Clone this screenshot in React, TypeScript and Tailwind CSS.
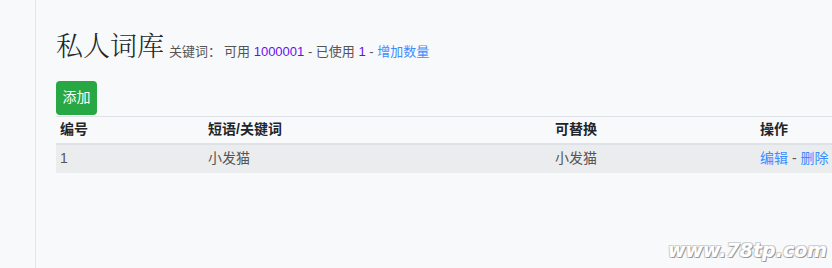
const CJK = '"Liberation Sans", "Noto Sans CJK SC", sans-serif'

const COLS = 'grid grid-cols-[148px_347px_205px_100px]'

export default function App() {
  return (
    <div
      className="relative flex h-[268px] w-[832px] overflow-hidden bg-[#f8f9fa] text-[14px]"
      style={{ fontFamily: CJK }}
    >
      {/* sidebar edge */}
      <div className="w-[36px] shrink-0 border-r border-[#e3e5e8]" />

      <div className="pl-[20px] pt-[29px]">
        {/* Heading */}
        <div className="flex items-baseline gap-[5px] whitespace-nowrap">
          <h1 className="text-[27px] font-light leading-[32px] text-[#212529] [font-family:'Noto_Serif_CJK_SC','Noto_Sans_CJK_SC',serif]">
            私人词库
          </h1>
          <span className="text-[13px] text-[#555]">
            关键词<span className="mr-[3px] [font-family:'Noto_Sans_CJK_SC',sans-serif]">：</span>可用{' '}
            <span className="text-[#6610f2]">1000001</span> - 已使用{' '}
            <span className="text-[#6610f2]">1</span> -{' '}
            <span className="text-[#3b8dff]">增加数量</span>
          </span>
        </div>

        <button className="mt-[19px] flex h-[34px] w-[41px] items-center justify-center rounded-[4px] bg-[#28a745] text-[14px] text-white">
          添加
        </button>

        {/* Table */}
        <div className="mt-[1px] w-[800px] border-t border-[#dee2e6]">
          <div className={`${COLS} h-[28px] items-center border-b-2 border-[#dee2e6] font-bold text-[#212529]`}>
            <div className="px-[4px]">编号</div>
            <div className="px-[4px]">短语/关键词</div>
            <div className="px-[4px]">可替换</div>
            <div className="px-[4px]">操作</div>
          </div>
          <div className={`${COLS} h-[28px] items-center bg-[#ebecee] text-[#555]`}>
            <div className="px-[4px]">1</div>
            <div className="px-[4px]">小发猫</div>
            <div className="px-[4px]">小发猫</div>
            <div className="whitespace-nowrap px-[4px]">
              <span className="text-[#3b8dff]">编辑</span> - <span className="text-[#3b8dff]">删除</span>
            </div>
          </div>
        </div>
      </div>

      {/* watermark */}
      <div className="absolute bottom-[8px] right-[5px] text-[19px] font-bold italic leading-none text-white [font-family:'DejaVu_Sans',sans-serif] [text-shadow:1px_1px_0_#9a9a9a,-1px_-1px_0_#d0d0d0,1px_-1px_0_#d0d0d0,-1px_1px_0_#d0d0d0]">
        www.78tp.com
      </div>
    </div>
  )
}
